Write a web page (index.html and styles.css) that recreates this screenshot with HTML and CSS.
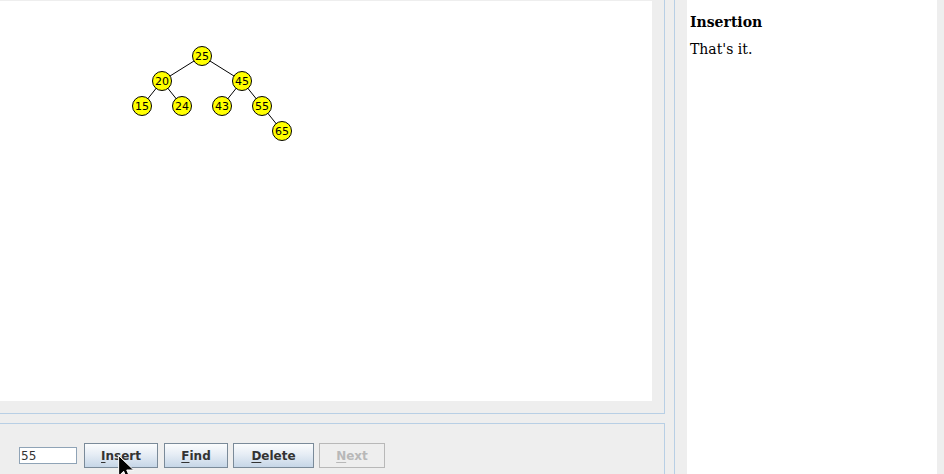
FILE: index.html
```html
<!DOCTYPE html>
<html>
<head>
<meta charset="utf-8">
<link rel="stylesheet" href="styles.css">
</head>
<body>
<div class="app">
  <div class="left">
    <div class="canvas-frame">
      <div class="canvas">
        <svg class="tree" width="652" height="400" viewBox="0 0 652 400">
          <g stroke="#000" stroke-width="1">
            <line x1="202" y1="55" x2="162" y2="80"/>
            <line x1="202" y1="55" x2="242" y2="80"/>
            <line x1="162" y1="80" x2="142" y2="105"/>
            <line x1="162" y1="80" x2="182" y2="105"/>
            <line x1="242" y1="80" x2="222" y2="105"/>
            <line x1="242" y1="80" x2="262" y2="105"/>
            <line x1="262" y1="105" x2="282" y2="130"/>
          </g>
          <g fill="#ffff00" stroke="#000" stroke-width="1">
            <circle cx="202" cy="55" r="9.5"/>
            <circle cx="162" cy="80" r="9.5"/>
            <circle cx="242" cy="80" r="9.5"/>
            <circle cx="142" cy="105" r="9.5"/>
            <circle cx="182" cy="105" r="9.5"/>
            <circle cx="222" cy="105" r="9.5"/>
            <circle cx="262" cy="105" r="9.5"/>
            <circle cx="282" cy="130" r="9.5"/>
          </g>
          <g class="lbl" text-anchor="middle">
            <text x="202" y="59">25</text>
            <text x="162" y="84">20</text>
            <text x="242" y="84">45</text>
            <text x="142" y="109">15</text>
            <text x="182" y="109">24</text>
            <text x="222" y="109">43</text>
            <text x="262" y="109">55</text>
            <text x="282" y="134">65</text>
          </g>
        </svg>
      </div>
    </div>
    <div class="controls">
      <input class="field" type="text" value="55">
      <button class="btn btn-insert"><u>I</u>nsert</button>
      <button class="btn btn-find"><u>F</u>ind</button>
      <button class="btn btn-delete"><u>D</u>elete</button>
      <button class="btn btn-next" disabled><u>N</u>ext</button>
      <svg class="cursor" width="20" height="30" viewBox="0 0 16 24">
        <path d="M0.5 0.5 L0.5 17 L4.5 13 L7.5 20 L10 19 L7 12 L12.5 12 Z" fill="#000" stroke="#fff" stroke-width="0.8"/>
      </svg>
    </div>
  </div>
  <div class="divider"></div>
  <div class="right">
    <div class="doc">
      <h1 class="doc-title">Insertion</h1>
      <p class="doc-text">That's it.</p>
    </div>
  </div>
</div>
</body>
</html>
```
FILE: styles.css
```css
html, body {
  margin: 0;
  padding: 0;
  background: #eeeeee;
  width: 944px;
  height: 474px;
  overflow: hidden;
}
.app {
  display: flex;
  height: 474px;
}
.left {
  width: 665px;
  display: flex;
  flex-direction: column;
}
.canvas-frame {
  border-right: 1px solid #b8cfe5;
  border-bottom: 1px solid #b8cfe5;
  padding-top: 1px;
  box-sizing: border-box;
  height: 414px;
}
.canvas {
  width: 652px;
  height: 400px;
  background: #ffffff;
}
.tree {
  display: block;
}
.lbl text {
  font-family: "DejaVu Sans", sans-serif;
  font-size: 11px;
  fill: #000;
}
.controls {
  position: relative;
  margin-top: 9px;
  flex: 1;
  border-top: 1px solid #b8cfe5;
  border-right: 1px solid #b8cfe5;
  display: flex;
  align-items: flex-start;
  padding: 19px 0 0 19px;
}
.field {
  width: 58px;
  height: 17px;
  box-sizing: border-box;
  margin: 4px 7px 0 0;
  border: 1px solid #8fa3b6;
  background: #fff;
  padding: 0 1px;
  font-family: "DejaVu Sans", sans-serif;
  font-size: 12px;
  color: #333;
  outline: none;
}
.btn {
  height: 25px;
  box-sizing: border-box;
  border: 1px solid #7a8a99;
  background: linear-gradient(#fbfcfd 0%, #e6edf5 45%, #c6d6e7 100%);
  font-family: "DejaVu Sans", sans-serif;
  font-weight: bold;
  font-size: 12px;
  color: #333333;
  padding: 0;
  line-height: 22px;
}
.btn u {
  text-decoration-thickness: 1px;
  text-underline-offset: 2px;
}
.btn-insert { width: 74px; margin-right: 6px; }
.btn-find { width: 64px; margin-right: 5px; }
.btn-delete { width: 81px; margin-right: 5px; }
.btn-next {
  width: 66px;
  background: #eeeeee;
  border-color: #b8b8b8;
  color: #b8b8b8;
}
.cursor {
  position: absolute;
  left: 118px;
  top: 31px;
}
.divider {
  width: 9px;
  border-right: 1px solid #b8cfe5;
}
.right {
  flex: 1;
  display: flex;
  padding-left: 12px;
  padding-right: 7px;
}
.doc {
  flex: 1;
  background: #ffffff;
  padding: 13px 3px;
}
.doc-title {
  margin: 0;
  font-family: "DejaVu Serif", serif;
  font-weight: bold;
  font-size: 14px;
  color: #000;
  line-height: 18px;
}
.doc-text {
  margin: 9px 0 0 0;
  font-family: "DejaVu Serif", serif;
  font-size: 14px;
  color: #000;
  line-height: 18px;
}
```
